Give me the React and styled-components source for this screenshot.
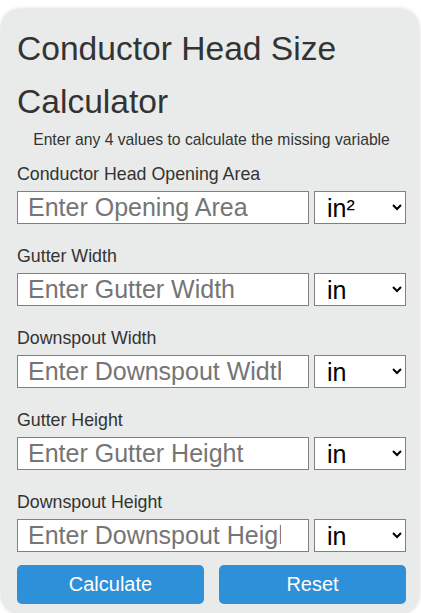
import React from "react";
import styled, { createGlobalStyle } from "styled-components";

const Global = createGlobalStyle`
  html, body { margin: 0; padding: 0; background: #ffffff; }
  body { font-family: "Liberation Sans", Arial, sans-serif; }
`;

const Card = styled.div`
  margin: 9px 2px 0 1px;
  background: #e9ebea;
  border-radius: 20px;
  box-shadow: 0 0 4px rgba(0, 0, 0, 0.18);
  padding: 13px 13px 10px 16px;
  color: #333333;
`;

const Title = styled.h1`
  margin: 0;
  font-size: 33.6px;
  line-height: 53px;
  font-weight: 400;
  color: #333333;
`;

const Subtitle = styled.p`
  margin: 2px 0 14px;
  font-size: 15.7px;
  line-height: 20px;
  text-align: center;
`;

const Fields = styled.div`
  display: flex;
  flex-direction: column;
  gap: 22px;
  margin-bottom: 13px;
`;

const Field = styled.div`
  display: flex;
  flex-direction: column;
`;

const Label = styled.label`
  font-size: 17.8px;
  line-height: 20px;
  margin-bottom: 7px;
  color: #333333;
`;

const Row = styled.div`
  display: flex;
  gap: 5px;
`;

const Input = styled.input`
  box-sizing: border-box;
  width: 292px;
  height: 33px;
  border: 1px solid #808080;
  background: #ffffff;
  font-family: inherit;
  font-size: 25px;
  padding: 0 27px 0 10px;
  outline: none;
  &::placeholder { color: #757575; }
`;

const Select = styled.select`
  box-sizing: border-box;
  width: 92px;
  height: 33px;
  border: 1px solid #808080;
  border-radius: 0;
  background: #ffffff;
  font-family: inherit;
  font-size: 25px;
  color: #000;
  padding: 0 0 0 8px;
`;

const Buttons = styled.div`
  display: grid;
  grid-template-columns: 187px 187px;
  column-gap: 15px;
`;

const Button = styled.button`
  height: 39px;
  border: none;
  border-radius: 5px;
  background: #2e90d8;
  color: #ffffff;
  font-family: inherit;
  font-size: 20px;
  cursor: pointer;
`;

const fields = [
  { label: "Conductor Head Opening Area", ph: "Enter Opening Area", unit: "in²" },
  { label: "Gutter Width", ph: "Enter Gutter Width", unit: "in" },
  { label: "Downspout Width", ph: "Enter Downspout Width", unit: "in" },
  { label: "Gutter Height", ph: "Enter Gutter Height", unit: "in" },
  { label: "Downspout Height", ph: "Enter Downspout Height", unit: "in" },
];

export default function App() {
  return (
    <>
      <Global />
      <Card>
        <Title>Conductor Head Size Calculator</Title>
        <Subtitle>Enter any 4 values to calculate the missing variable</Subtitle>
        <Fields>
          {fields.map((f) => (
            <Field key={f.label}>
              <Label>{f.label}</Label>
              <Row>
                <Input placeholder={f.ph} />
                <Select defaultValue={f.unit}>
                  <option>{f.unit}</option>
                </Select>
              </Row>
            </Field>
          ))}
        </Fields>
        <Buttons>
          <Button>Calculate</Button>
          <Button>Reset</Button>
        </Buttons>
      </Card>
    </>
  );
}
